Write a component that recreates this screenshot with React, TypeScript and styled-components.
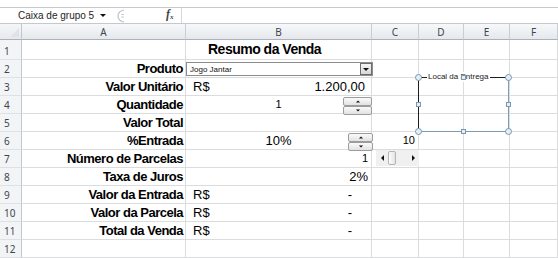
import React from "react";
import styled, { createGlobalStyle } from "styled-components";

const COLS = ["A", "B", "C", "D", "E", "F"];

type Row = {
  label?: string;
  b?: React.ReactNode;
  bAlign?: "left" | "center" | "right";
  c?: React.ReactNode;
};

const getRows = (): Row[] => [
  {},
  { label: "Produto" },
  { label: "Valor Unitário", b: <SplitBox><span>R$</span><span>1.200,00</span></SplitBox> },
  { label: "Quantidade", b: <Small>1</Small>, bAlign: "center" },
  { label: "Valor Total" },
  { label: "%Entrada", b: "10%", bAlign: "center", c: <Small>10</Small> },
  { label: "Número de Parcelas", b: <Small>1</Small>, bAlign: "right" },
  { label: "Taxa de Juros", b: "2%", bAlign: "right" },
  { label: "Valor da Entrada", b: <SplitBox><span>R$</span><Dash>-</Dash></SplitBox> },
  { label: "Valor da Parcela", b: <SplitBox><span>R$</span><Dash>-</Dash></SplitBox> },
  { label: "Total da Venda", b: <SplitBox><span>R$</span><Dash>-</Dash></SplitBox> },
  {},
];

const Arrow = ({ dir }: { dir: "up" | "down" | "left" | "right" }) => {
  const pts = {
    up: "0,4 3,1 6,4",
    down: "0,1 6,1 3,4",
    left: "4,0 4,6 1,3",
    right: "1,0 1,6 4,3",
  }[dir];
  const w = dir === "up" || dir === "down" ? 6 : 5;
  const h = dir === "up" || dir === "down" ? 5 : 6;
  return (
    <svg width={w} height={h} viewBox={`0 0 ${w} ${h}`}>
      <polygon points={pts} fill="#111" />
    </svg>
  );
};

export default function App() {
  const rows = getRows();
  return (
    <>
      <GlobalStyle />
      <Top>
        <FormulaBar>
          <NameBox>
            <span>Caixa de grupo 5</span>
            <NameArrow>
              <Arrow dir="down" />
            </NameArrow>
          </NameBox>
          <Grip>
            <svg width="12" height="14" viewBox="0 0 12 14">
              <path d="M8 1 C3 2 2 5 2 7 C2 9 3 12 8 13" fill="none" stroke="#b9c2cc" strokeWidth="1.2" />
              <line x1="5" y1="5.5" x2="8" y2="5.5" stroke="#c8d0d8" />
              <line x1="5" y1="8" x2="8" y2="8" stroke="#c8d0d8" />
            </svg>
          </Grip>
          <Fx>
            f<sub>x</sub>
          </Fx>
          <FormulaInput />
        </FormulaBar>
      </Top>
      <Sheet>
        <Corner>
          <svg width="9" height="9" viewBox="0 0 9 9">
            <polygon points="9,0 9,9 0,9" fill="#dfe3e8" />
          </svg>
        </Corner>
        {COLS.map((c) => (
          <ColHeader key={c}>{c}</ColHeader>
        ))}
        {rows.map((r, i) => (
          <React.Fragment key={i}>
            <RowHeader>{i + 1}</RowHeader>
            <Cell $align="right" $bold>
              {r.label}
            </Cell>
            {i === 0 ? (
              <Title>Resumo da Venda</Title>
            ) : (
              <Cell $align={r.bAlign ?? "left"}>{r.b}</Cell>
            )}
            <Cell $align="right">{r.c}</Cell>
            <Cell />
            <Cell />
            <Cell />
          </React.Fragment>
        ))}

        <Combo>
          <ComboText>Jogo Jantar</ComboText>
          <ComboButton>
            <Arrow dir="down" />
          </ComboButton>
        </Combo>

        <Spinner style={{ left: 343, top: 73, width: 29 }}>
          <SpinBtn>
            <Arrow dir="up" />
          </SpinBtn>
          <SpinBtn>
            <Arrow dir="down" />
          </SpinBtn>
        </Spinner>

        <Spinner style={{ left: 348, top: 109, width: 25 }}>
          <SpinBtn>
            <Arrow dir="up" />
          </SpinBtn>
          <SpinBtn>
            <Arrow dir="down" />
          </SpinBtn>
        </Spinner>

        <ScrollBar>
          <ScrollArrow>
            <Arrow dir="left" />
          </ScrollArrow>
          <Thumb />
          <Track />
          <ScrollArrow>
            <Arrow dir="right" />
          </ScrollArrow>
        </ScrollBar>

        <GroupBox>
          <GroupLabel>Local da Entrega</GroupLabel>
          <Handle $round style={{ left: -4, top: -4 }} />
          <Handle $round style={{ right: -4, top: -4 }} />
          <Handle $round style={{ left: -4, bottom: -4 }} />
          <Handle $round style={{ right: -4, bottom: -4 }} />
          <Handle style={{ left: 42, top: -3 }} />
          <Handle style={{ left: 42, bottom: -3 }} />
          <Handle style={{ left: -3, top: 24 }} />
          <Handle style={{ right: -3, top: 24 }} />
        </GroupBox>
      </Sheet>
    </>
  );
}

const GlobalStyle = createGlobalStyle`
html, body {
  margin: 0;
  padding: 0;
  background: #ffffff;
  font-family: 'Liberation Sans', Arial, sans-serif;
  overflow: hidden;
}
`;

const Top = styled.div`
  padding-top: 7px;
  background: #ffffff;
`;

const FormulaBar = styled.div`
  height: 15px;
  display: flex;
  align-items: center;
  border-top: 1px solid #c5c9ce;
  border-bottom: 1px solid #c5c9ce;
`;

const NameBox = styled.div`
  width: 110px;
  display: flex;
  align-items: center;
  padding-left: 18px;
  box-sizing: border-box;
  font-family: 'Liberation Sans', Arial, sans-serif;
  font-size: 10px;
  color: #1e1e1e;
  white-space: nowrap;
`;

const NameArrow = styled.span`
  margin-left: auto;
  margin-right: 4px;
  display: flex;
`;

const Grip = styled.div`
  width: 14px;
  margin-left: 6px;
  display: flex;
`;

const Fx = styled.div`
  margin-left: 36px;
  width: 15px;
  font-family: 'Liberation Serif', serif;
  font-style: italic;
  font-weight: bold;
  font-size: 12px;
  color: #444;
  line-height: 12px;

  sub {
    font-size: 7px;
    vertical-align: -1px;
  }
`;

const FormulaInput = styled.div`
  flex: 1;
  height: 15px;
  border-left: 1px solid #d4d8dd;
`;

const Sheet = styled.div`
  position: relative;
  display: grid;
  grid-template-columns: 22px 164px 186px 47px 45px 46px 1fr;
  grid-template-rows: 16px 20px repeat(11, 18px);
`;

const Corner = styled.div`
  background: linear-gradient(#f5f6f8, #e6e9ed);
  border-right: 1px solid #c3c8ce;
  border-bottom: 1px solid #a9b2bc;
  display: flex;
  align-items: flex-end;
  justify-content: flex-end;
  padding: 0 2px 2px 0;
  box-sizing: border-box;
`;

const ColHeader = styled.div`
  background: linear-gradient(#f7f8fa, #e5e8ec);
  border-right: 1px solid #c9ced4;
  border-bottom: 1px solid #a9b2bc;
  box-sizing: border-box;
  display: flex;
  align-items: center;
  justify-content: center;
  font-family: 'Noto Sans', 'Open Sans', sans-serif;
  font-size: 10px;
  color: #3d4650;
`;

const RowHeader = styled.div`
  background: #f3f4f6;
  border-right: 1px solid #c3c8ce;
  border-bottom: 1px solid #dde0e4;
  box-sizing: border-box;
  display: flex;
  align-items: flex-end;
  padding: 0 0 2px 4px;
  font-family: 'Noto Sans', 'Open Sans', sans-serif;
  font-size: 10px;
  line-height: 12px;
  color: #3d4650;
`;

const Cell = styled.div<{ $align?: "left" | "center" | "right"; $bold?: boolean }>`
  border-right: 1px solid #dadcdd;
  border-bottom: 1px solid #dadcdd;
  box-sizing: border-box;
  display: flex;
  align-items: flex-end;
  justify-content: ${({ $align }) =>
    $align === "right" ? "flex-end" : $align === "center" ? "center" : "flex-start"};
  padding: 0 ${({ $bold }) => ($bold ? "2px" : "3px")} 1px 3px;
  font-size: 13px;
  line-height: 15px;
  font-weight: ${({ $bold }) => ($bold ? "bold" : "normal")};
  letter-spacing: ${({ $bold }) => ($bold ? "-0.5px" : "0")};
  color: #000;
  white-space: nowrap;
  overflow: visible;
`;

const Title = styled(Cell)`
  font-weight: bold;
  font-size: 14px;
  letter-spacing: -0.5px;
  padding-left: 22px;
  padding-bottom: 2px;
`;

const SplitBox = styled.div`
  flex: 1;
  display: flex;
  justify-content: space-between;
  padding-left: 4px;
  padding-right: 3px;
`;

const Dash = styled.span`
  margin-right: 13px;
`;

const Small = styled.span`
  font-size: 11px;
`;

const Combo = styled.div`
  position: absolute;
  left: 186px;
  top: 38px;
  width: 187px;
  height: 14px;
  box-sizing: border-box;
  border: 1px solid #8d8d8d;
  background: #fff;
  display: flex;
  align-items: center;
`;

const ComboText = styled.span`
  flex: 1;
  font-size: 8px;
  padding-left: 3px;
  color: #111;
`;

const ComboButton = styled.div`
  width: 12px;
  height: 12px;
  box-sizing: border-box;
  border: 1px solid #6d6d6d;
  background: linear-gradient(#f4f4f4, #d8d8d8);
  display: flex;
  align-items: center;
  justify-content: center;
`;

const Spinner = styled.div`
  position: absolute;
  height: 18px;
  display: flex;
  flex-direction: column;
`;

const SpinBtn = styled.div`
  flex: 1;
  box-sizing: border-box;
  border: 1px solid #9c9c9c;
  border-radius: 2px;
  background: linear-gradient(#fafafa, #e2e2e2);
  display: flex;
  align-items: center;
  justify-content: center;

  svg {
    transform: scale(0.7);
  }
`;

const ScrollBar = styled.div`
  position: absolute;
  left: 376px;
  top: 126px;
  width: 43px;
  height: 16px;
  display: flex;
  align-items: stretch;
  background: #f0f0f0;
`;

const ScrollArrow = styled.div`
  width: 12px;
  display: flex;
  align-items: center;
  justify-content: center;
`;

const Thumb = styled.div`
  width: 6px;
  margin: 1px 0;
  border: 1px solid #b5b5b5;
  border-radius: 2px;
  background: linear-gradient(90deg, #fdfdfd, #e4e4e4);
`;

const Track = styled.div`
  flex: 1;
`;

const GroupBox = styled.div`
  position: absolute;
  left: 418px;
  top: 53px;
  width: 91px;
  height: 55px;
  box-sizing: border-box;
  border-left: 1px solid #1d1d1d;
  border-top: 1px solid #1d1d1d;
  border-right: 1px solid #7f9ab4;
  border-bottom: 1px solid #7f9ab4;
`;

const GroupLabel = styled.span`
  position: absolute;
  left: 8px;
  top: -6px;
  padding: 0 1px;
  background: #fff;
  font-size: 8px;
  line-height: 10px;
  color: #222;
`;

const Handle = styled.div<{ $round?: boolean }>`
  position: absolute;
  width: ${({ $round }) => ($round ? "7px" : "5px")};
  height: ${({ $round }) => ($round ? "7px" : "5px")};
  box-sizing: border-box;
  border: 1px solid #7d97ad;
  border-radius: ${({ $round }) => ($round ? "50%" : "0")};
  background: #e3eef6;
`;
